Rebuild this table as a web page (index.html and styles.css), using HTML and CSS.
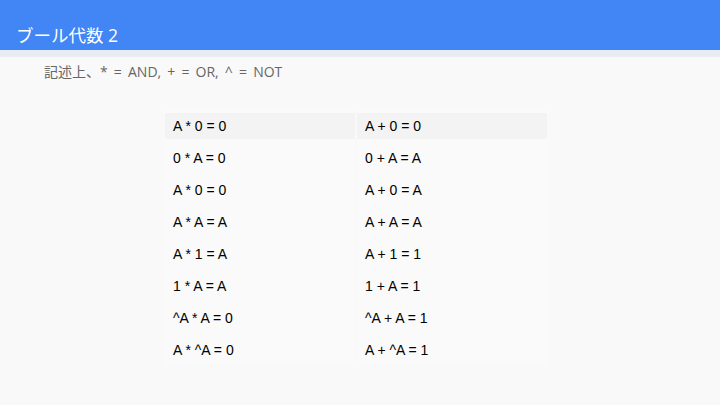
FILE: index.html
```html
<!DOCTYPE html>
<html lang="ja">
<head>
<meta charset="utf-8">
<title>ブール代数 2</title>
<link rel="stylesheet" href="styles.css">
</head>
<body>
<header class="title-bar">
  <h1 class="title">ブール代数 2</h1>
</header>
<div class="title-shadow"></div>
<p class="note">記述上、* = AND, + = OR, ^ = NOT</p>
<div class="table-wrap">
  <table class="laws">
    <tr class="first"><td>A * 0 = 0</td><td>A + 0 = 0</td></tr>
    <tr><td>0 * A = 0</td><td>0 + A = A</td></tr>
    <tr><td>A * 0 = 0</td><td>A + 0 = A</td></tr>
    <tr><td>A * A = A</td><td>A + A = A</td></tr>
    <tr><td>A * 1 = A</td><td>A + 1 = 1</td></tr>
    <tr><td>1 * A = A</td><td>1 + A = 1</td></tr>
    <tr><td>^A * A = 0</td><td>^A + A = 1</td></tr>
    <tr><td>A * ^A = 0</td><td>A + ^A = 1</td></tr>
  </table>
</div>
</body>
</html>
```
FILE: styles.css
```css
html, body {
  margin: 0;
  padding: 0;
}
body {
  width: 720px;
  height: 405px;
  overflow: hidden;
  background: #f9f9f9;
  font-family: "Open Sans", "Noto Sans CJK JP", sans-serif;
}
.title-bar {
  height: 50px;
  background: #4285f4;
  display: flex;
  align-items: center;
  padding: 19px 0 0 16px;
  box-sizing: border-box;
}
.title {
  margin: 0;
  font-weight: normal;
  font-size: 17.5px;
  line-height: 24px;
  color: #ffffff;
}
.title-shadow {
  height: 7px;
  background: #e9ecf2;
}
.note {
  margin: 5px 0 0 44px;
  font-size: 14px;
  line-height: 20px;
  word-spacing: 2.5px;
  color: #666666;
}
.table-wrap {
  margin: 28px 0 0 165px;
}
.laws {
  border-collapse: separate;
  border-spacing: 2px 0;
  margin-left: -2px;
  font-family: "Liberation Sans", Arial, sans-serif;
  font-size: 14px;
  color: #000000;
}
.laws td {
  width: 174px;
  height: 32px;
  padding: 0 8px;
  box-sizing: content-box;
  background: #fafafa;
  vertical-align: middle;
}
.laws tr.first td {
  background: linear-gradient(#f3f3f3, #f3f3f3) 0 3px / 100% 26px no-repeat, #fafafa;
}
```
